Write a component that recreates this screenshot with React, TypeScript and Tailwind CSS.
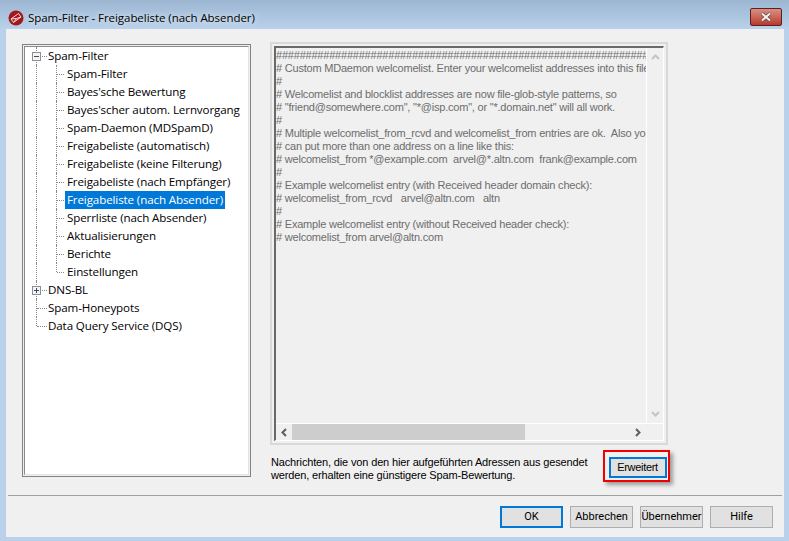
const items = [
  "Spam-Filter",
  "Bayes'sche Bewertung",
  "Bayes'scher autom. Lernvorgang",
  "Spam-Daemon (MDSpamD)",
  "Freigabeliste (automatisch)",
  "Freigabeliste (keine Filterung)",
  "Freigabeliste (nach Empfänger)",
  "Freigabeliste (nach Absender)",
  "Sperrliste (nach Absender)",
  "Aktualisierungen",
  "Berichte",
  "Einstellungen",
];

const lines = [
  "##############################################################################################",
  "# Custom MDaemon welcomelist. Enter your welcomelist addresses into this file.",
  "#",
  "# Welcomelist and blocklist addresses are now file-glob-style patterns, so",
  '# "friend@somewhere.com", "*@isp.com", or "*.domain.net" will all work.',
  "#",
  "# Multiple welcomelist_from_rcvd and welcomelist_from entries are ok.  Also you",
  "# can put more than one address on a line like this:",
  "# welcomelist_from *@example.com  arvel@*.altn.com  frank@example.com",
  "#",
  "# Example welcomelist entry (with Received header domain check):",
  "# welcomelist_from_rcvd   arvel@altn.com   altn",
  "#",
  "# Example welcomelist entry (without Received header check):",
  "# welcomelist_from arvel@altn.com",
];

function Box({ sign }: { sign: "-" | "+" }) {
  return (
    <span className="absolute left-[7px] top-[5px] z-10 flex h-[9px] w-[9px] items-center justify-center border border-[#8e8f8f] bg-[#f4f4f4]">
      <svg width="7" height="7" viewBox="0 0 7 7">
        <path d="M1 3.5H6" stroke="#3d4a7a" />
        {sign === "+" && <path d="M3.5 1V6" stroke="#3d4a7a" />}
      </svg>
    </span>
  );
}

function Top({ label, sign, last }: { label: string; sign?: "-" | "+"; last?: boolean }) {
  return (
    <div className="relative h-[18px] pl-[23px] leading-[18px] text-black">
      {sign && <Box sign={sign} />}
      <span className={`absolute left-[11px] top-0 border-l border-dotted border-[#888] ${last ? "h-[9px]" : "h-[18px]"}`} />
      <span className="absolute left-[12px] top-[9px] w-[10px] border-t border-dotted border-[#888]" />
      {label}
    </div>
  );
}

function Tree() {
  return (
    <div className="mt-[2px] h-[433px] w-[229px] shrink-0 border border-[#838383] bg-[#f0f0f0] p-[1px]">
      <div className="h-full border border-t-[#8a8a8a] border-l-[#8a8a8a] border-r-[#e3e3e3] border-b-[#e3e3e3] bg-white text-[11.6px] tracking-[-0.12px] font-['Open_Sans','DejaVu_Sans',sans-serif]">
        <Top label="Spam-Filter" sign="-" />
        {items.map((t, i) => (
          <div key={t} className="relative h-[18px] pl-[40px] leading-[18px] text-black">
            <span className="absolute left-[11px] top-0 h-[18px] border-l border-dotted border-[#888]" />
            <span className={`absolute left-[31px] top-0 border-l border-dotted border-[#888] ${i === items.length - 1 ? "h-[9px]" : "h-[18px]"}`} />
            <span className="absolute left-[32px] top-[9px] w-[7px] border-t border-dotted border-[#888]" />
            <span className={`inline-block h-[18px] px-[2px] ${t === "Freigabeliste (nach Absender)" ? "bg-[#0078d7] text-white" : ""}`}>{t}</span>
          </div>
        ))}
        <Top label="DNS-BL" sign="+" />
        <Top label="Spam-Honeypots" />
        <Top label="Data Query Service (DQS)" last />
      </div>
    </div>
  );
}

function Editor() {
  return (
    <div className="h-[403px] w-[398px] shrink-0 border-2 border-[#d9d9d9] p-[2px]">
      <div className="flex h-full flex-col border-t-2 border-l-2 border-[#696969] border-r border-r-white border-b border-b-white">
        <div className="flex min-h-0 flex-1">
          <div className="flex-1 overflow-hidden whitespace-pre pt-[1px] text-[11px] leading-[13px] tracking-[-0.21px] text-[#6d6d6d] font-['Liberation_Sans',sans-serif]">
            {lines.map((l, i) => (
              <div key={i}>{l}</div>
            ))}
          </div>
          <div className="flex w-[17px] shrink-0 flex-col items-center justify-between border-l border-white py-[6px]">
            <svg width="9" height="6" viewBox="0 0 9 6"><path d="M1 5L4.5 1.5L8 5" fill="none" stroke="#c4c4c4" strokeWidth="2" /></svg>
            <svg width="9" height="6" viewBox="0 0 9 6"><path d="M1 1L4.5 4.5L8 1" fill="none" stroke="#c4c4c4" strokeWidth="2" /></svg>
          </div>
        </div>
        <div className="flex h-[17px] shrink-0 items-center border-t border-white">
          <div className="flex w-[16px] justify-center">
            <svg width="6" height="9" viewBox="0 0 6 9"><path d="M5 1L1.5 4.5L5 8" fill="none" stroke="#5f5f5f" strokeWidth="2" /></svg>
          </div>
          <div className="h-full w-[233px] bg-[#cdcdcd]" />
          <div className="flex-1" />
          <div className="flex w-[28px] justify-start">
            <svg width="6" height="9" viewBox="0 0 6 9"><path d="M1 1L4.5 4.5L1 8" fill="none" stroke="#5f5f5f" strokeWidth="2" /></svg>
          </div>
        </div>
      </div>
    </div>
  );
}

function Btn({ label, primary }: { label: string; primary?: boolean }) {
  return (
    <button
      className={`flex h-[22px] w-[63px] items-center justify-center bg-[#e1e1e1] text-[11px] text-black font-['Roboto',sans-serif] ${primary ? "border-2 border-[#0078d7]" : "border border-[#adadad]"}`}
    >
      {label}
    </button>
  );
}

export default function App() {
  return (
    <div className="flex h-[541px] w-[789px] flex-col overflow-hidden bg-[#b9d1ea] font-['Liberation_Sans',sans-serif]">
      <div className="flex h-[29px] shrink-0 items-center bg-gradient-to-b from-[#9cb6d2] to-[#b9d1ea] pl-[8px] pt-[6px]">
        <svg width="16" height="16" viewBox="0 0 16 16" className="mr-[4px]">
          <circle cx="8" cy="8" r="7.5" fill="#a3171c" />
          <path d="M3 9L10.5 3.5L13 7L5.5 12.5ZM3 9L8.5 8.5L13 7M5.5 12.5L8.5 8.5" stroke="#f6dcdc" strokeWidth="1" fill="none" />
        </svg>
        <span className="text-[11.5px] tracking-[-0.05px] text-black [text-shadow:0_0_6px_#fff] font-['Open_Sans','DejaVu_Sans',sans-serif]">Spam-Filter - Freigabeliste (nach Absender)</span>
        <div className="ml-auto mr-[7px] mb-[1px] flex h-[18px] w-[32px] items-center justify-center rounded-[2px] border border-[#5c2023] bg-gradient-to-b from-[#d88f85] to-[#b8372b]">
          <svg width="14" height="10" viewBox="0 0 14 10">
            <path d="M3 1.5L11 8.5M11 1.5L3 8.5" stroke="#5a3a3a" strokeWidth="3.4" />
            <path d="M3 1.5L11 8.5M11 1.5L3 8.5" stroke="#f0f0f0" strokeWidth="2.2" />
          </svg>
        </div>
      </div>
      <div className="ml-[6px] mr-[5px] mb-[4px] flex min-h-0 flex-1 flex-col bg-[#f0f0f0]">
        <div className="flex min-h-0 flex-1 gap-[19px] pl-[16px] pt-[13px]">
          <Tree />
          <div className="flex flex-col">
            <Editor />
            <div className="mt-[5px] flex items-start">
              <p className="w-[333px] shrink-0 pl-[1px] pt-[6px] text-[11px] leading-[13px] tracking-[-0.15px] text-black">
                Nachrichten, die von den hier aufgeführten Adressen aus gesendet werden, erhalten eine günstigere Spam-Bewertung.
              </p>
              <div className="flex h-[32px] w-[67px] shrink-0 items-center justify-center border-2 border-[#f00000] pl-[2px] pt-[3px] shadow-[3px_3px_4px_rgba(0,0,0,0.35)]">
                <button className="flex h-[21px] w-[58px] items-center justify-center border-2 border-[#0078d7] bg-[#e1e1e1] text-[11px] tracking-[-0.3px] text-black">
                  Erweitert
                </button>
              </div>
            </div>
          </div>
        </div>
        <div className="mx-[2px] flex h-[42px] shrink-0 items-start justify-end gap-[7px] border-t border-[#a0a0a0] pr-[9px] pt-[10px]">
          <Btn label="OK" primary />
          <Btn label="Abbrechen" />
          <Btn label="Übernehmer" />
          <Btn label="Hilfe" />
        </div>
      </div>
    </div>
  );
}
